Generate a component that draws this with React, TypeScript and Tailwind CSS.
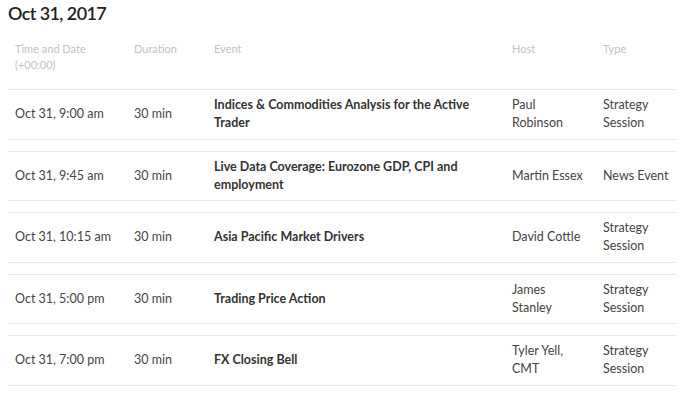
import React from "react";

const rows = [
  { time: "Oct 31, 9:00 am", dur: "30 min", event: "Indices & Commodities Analysis for the Active Trader", host: "Paul Robinson", type: "Strategy Session" },
  { time: "Oct 31, 9:45 am", dur: "30 min", event: "Live Data Coverage: Eurozone GDP, CPI and employment", host: "Martin Essex", type: "News Event" },
  { time: "Oct 31, 10:15 am", dur: "30 min", event: "Asia Pacific Market Drivers", host: "David Cottle", type: "Strategy Session" },
  { time: "Oct 31, 5:00 pm", dur: "30 min", event: "Trading Price Action", host: "James Stanley", type: "Strategy Session" },
  { time: "Oct 31, 7:00 pm", dur: "30 min", event: "FX Closing Bell", host: "Tyler Yell, CMT", type: "Strategy Session" },
];

const cols = "grid grid-cols-[119px_80px_298px_91px_80px]";

export default function App() {
  return (
    <div className="w-[680px] h-[393px] bg-white pl-[8px] pr-[4px] overflow-hidden" style={{ fontFamily: "Lato, 'Open Sans', sans-serif" }}>
      <h1 className="text-[18px] leading-[24px] font-semibold tracking-[-0.6px] text-[#222] pt-[1px]">Oct 31, 2017</h1>
      <div className={`${cols} mt-[16px] pb-[16px] text-[11px] leading-[16px] text-[#c2c2c2]`}>
        <div className="px-[7px]">Time and Date<br />(+00:00)</div>
        <div className="px-[7px]">Duration</div>
        <div className="px-[7px]">Event</div>
        <div className="px-[7px]">Host</div>
        <div className="px-[7px]">Type</div>
      </div>
      <div className="flex flex-col gap-[11px]">
        {rows.map((r) => (
          <div key={r.time} className={`${cols} h-[50.5px] border-y border-[#e6e6e6] items-center text-[12.5px] leading-[18px] text-[#444]`}>
            <div className="px-[7px]">{r.time}</div>
            <div className="px-[7px]">{r.dur}</div>
            <div className="px-[7px] font-bold text-[#333]">{r.event}</div>
            <div className="pl-[7px] pr-[12px]">{r.host}</div>
            <div className="pl-[7px]">{r.type}</div>
          </div>
        ))}
      </div>
    </div>
  );
}
